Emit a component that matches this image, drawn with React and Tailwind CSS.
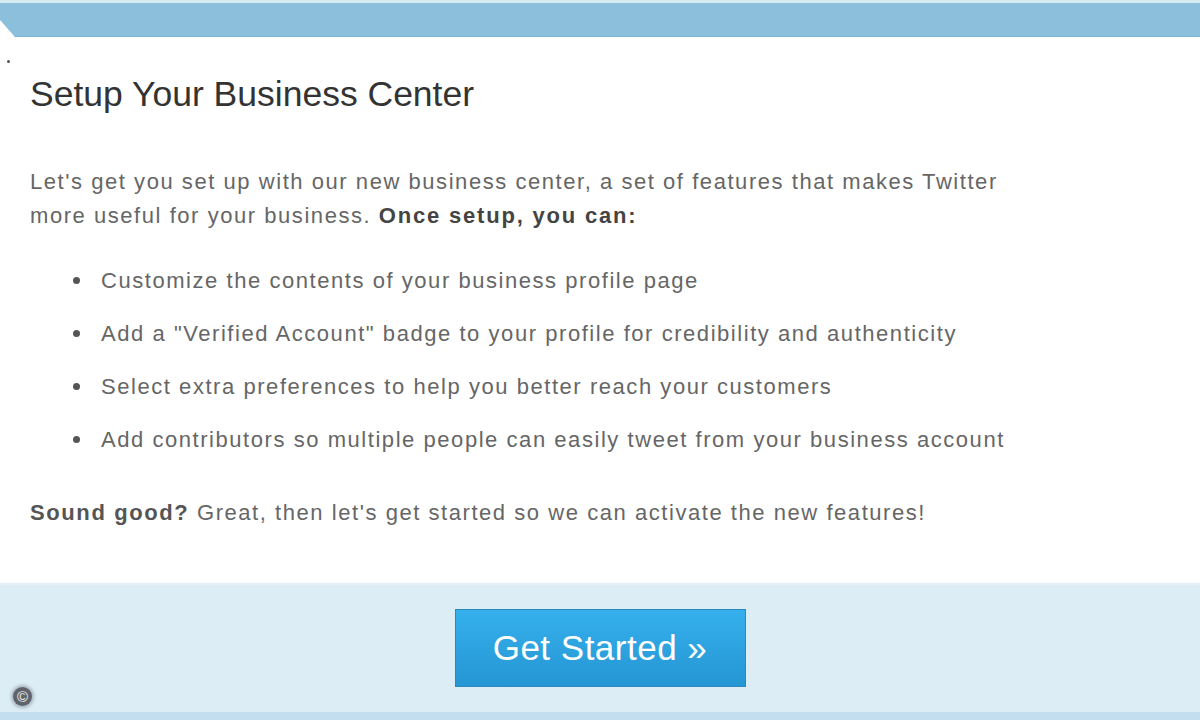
export default function App() {
  const items = [
    'Customize the contents of your business profile page',
    'Add a "Verified Account" badge to your profile for credibility and authenticity',
    'Select extra preferences to help you better reach your customers',
    'Add contributors so multiple people can easily tweet from your business account',
  ]

  return (
    <div
      className="w-[1200px] h-[720px] overflow-hidden bg-white flex flex-col"
      style={{ fontFamily: '"Liberation Sans", Arial, sans-serif' }}
    >
      {/* top strip */}
      <div className="h-[3px] bg-[#d6ecf3]" />
      <div className="h-[34px] bg-[#8bbfdb] border-b border-[#7fb0cc] [clip-path:polygon(0_0,100%_0,100%_100%,15px_100%,0_17px)]" />

      {/* content */}
      <div className="relative flex-1 flex flex-col px-[30px]">
        <span className="absolute left-[7px] top-[23px] w-[3px] h-[3px] rounded-full bg-[#555]" />
        <h1 className="mt-[38px] text-[35.5px] leading-[38px] text-[#333]">
          Setup Your Business Center
        </h1>
        <p className="mt-[52px] text-[22px] leading-[34px] text-[#666] tracking-[1.55px] whitespace-nowrap">
          Let's get you set up with our new business center, a set of features that makes Twitter
          <br />
          more useful for your business. <b className="text-[#444] tracking-[1.8px]">Once setup, you can:</b>
        </p>
        <ul className="mt-[34px] flex flex-col gap-[26px] pl-[43px]">
          {items.map((t) => (
            <li
              key={t}
              className="flex items-center gap-[21px] text-[22px] leading-[27px] text-[#666] tracking-[1.55px] whitespace-nowrap"
            >
              <span className="w-[7px] h-[7px] rounded-full bg-[#555] shrink-0" />
              {t}
            </li>
          ))}
        </ul>
        <p className="mt-[46px] text-[22px] leading-[27px] text-[#666] tracking-[1.55px] whitespace-nowrap">
          <b className="text-[#555] tracking-[1.6px]">Sound good?</b> Great, then let's get started so we can activate the new features!
        </p>
      </div>

      {/* footer */}
      <div className="relative h-[129px] bg-[#dcedf6] border-t-2 border-[#e4f0f3] flex justify-center pt-[24px]">
        <button className="w-[291px] h-[78px] bg-gradient-to-b from-[#35b0ec] to-[#2596d4] border border-[#2a8ac0] text-white text-[35px] tracking-[0.5px]">
          Get Started »
        </button>
        <span className="absolute left-[13px] bottom-[6px] w-[19px] h-[19px] rounded-full bg-[#5f646c] text-[#f4f4f4] text-[15px] leading-[19px] text-center shadow-[0_0_3px_2px_rgba(80,90,100,0.35)]">
          ©
        </span>
      </div>
      <div className="h-[8px] bg-[#c3deee]" />
    </div>
  )
}
